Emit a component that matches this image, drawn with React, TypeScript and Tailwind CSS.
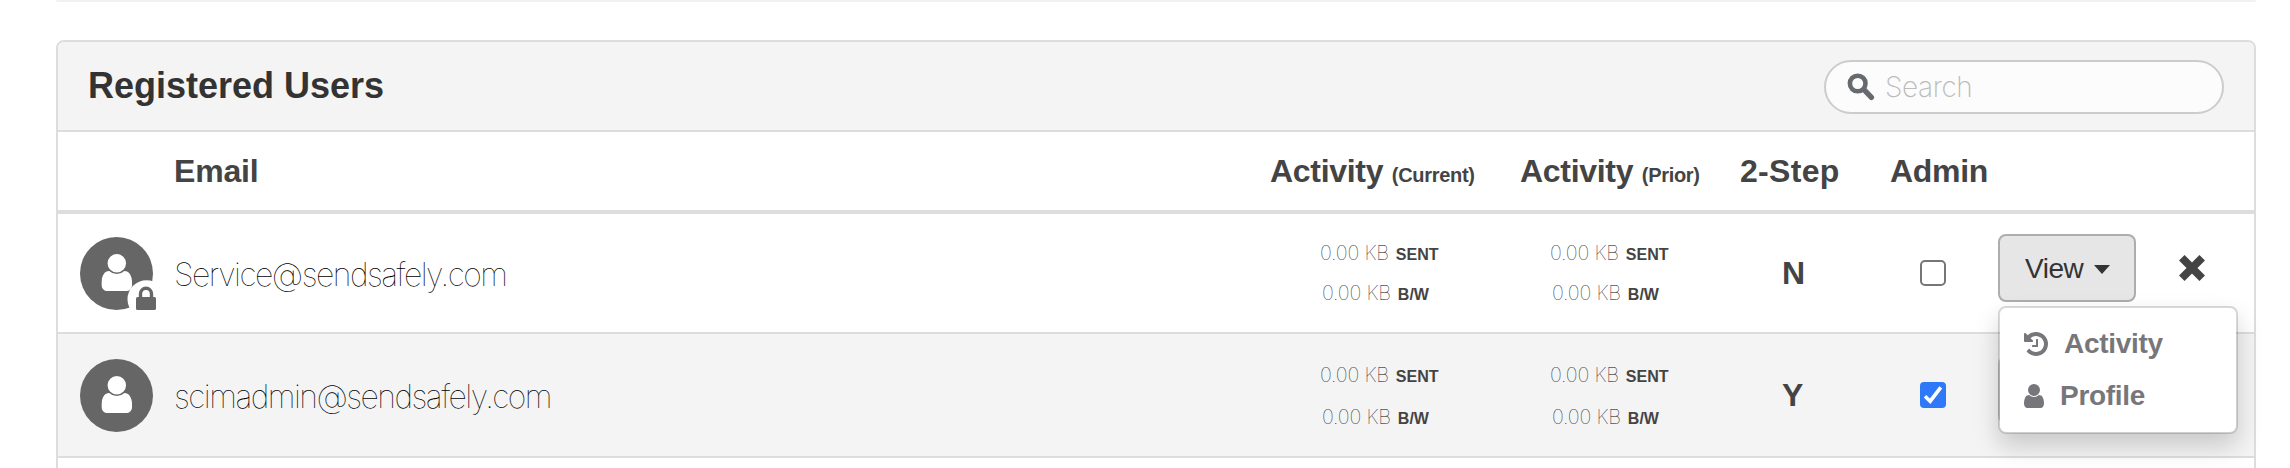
import type { ReactNode } from 'react';

const GRID = 'grid grid-cols-[116px_1fr_250px_220px_150px_108px_256px] items-center';

const USER_PATH =
  'M1280 1399q0 109-62.5 187t-150.5 78h-854q-88 0-150.5-78t-62.5-187q0-85 8.5-160.5t31.5-152 58.5-131 94-89 134.5-34.5q131 128 313 128t313-128q76 0 134.5 34.5t94 89 58.5 131 31.5 152 8.5 160.5zm-256-887q0 159-112.5 271.5t-271.5 112.5-271.5-112.5-112.5-271.5 112.5-271.5 271.5-112.5 271.5 112.5 112.5 271.5z';
const HISTORY_PATH =
  'M1664 896q0 156-61 298t-164 245-245 164-298 61q-172 0-327-72.5t-264-204.5q-7-10-6.5-22.5t8.5-20.5l137-138q10-9 25-9 16 2 23 12 73 95 179 147t225 52q104 0 198.5-40.5t163.5-109.5 109.5-163.5 40.5-198.5-40.5-198.5-109.5-163.5-163.5-109.5-198.5-40.5q-98 0-188 35.5t-160 101.5l137 138q31 30 14 69-17 40-59 40h-448q-26 0-45-19t-19-45v-448q0-42 40-59 39-17 69 14l130 129q107-101 244.5-156.5t284.5-55.5q156 0 298 61t245 164 164 245 61 298zm-640-288v448q0 14-9 23t-23 9h-320q-14 0-23-9t-9-23v-64q0-14 9-23t23-9h224v-352q0-14 9-23t23-9h64q14 0 23 9t9 23z';

interface User {
  email: string;
  twoStep: 'Y' | 'N';
  admin: boolean;
  locked: boolean;
}

const USERS: User[] = [
  { email: 'Service@sendsafely.com', twoStep: 'N', admin: false, locked: true },
  { email: 'scimadmin@sendsafely.com', twoStep: 'Y', admin: true, locked: false },
];

function Avatar({ locked }: { locked: boolean }) {
  return (
    <svg viewBox="0 0 78 73" className="ml-[22px] h-[73px] w-[78px]">
      <circle cx="36.5" cy="36.5" r="36.5" fill="#666" />
      <svg x="21.4" y="17" width="30.8" height="37" viewBox="0 128 1280 1536" preserveAspectRatio="none">
        <path d={USER_PATH} fill="#fff" />
      </svg>
      {locked && (
        <>
          <circle cx="66.5" cy="62.3" r="19" fill="#fff" />
          {/* padlock */}
          <path d="M60.5 62v-5.2a5.5 5.5 0 0 1 11 0V62" fill="none" stroke="#666" strokeWidth="3.4" />
          <rect x="56" y="60" width="20" height="13" rx="1.6" fill="#666" />
        </>
      )}
    </svg>
  );
}

function SearchIcon() {
  return (
    <svg viewBox="0 0 28 30" className="h-[30px] w-7" fill="none" stroke="#666a6e">
      <circle cx="10.7" cy="11.5" r="7.8" strokeWidth="4.6" />
      <path d="M17 17.7l7.4 7.6" strokeWidth="5.4" strokeLinecap="round" />
    </svg>
  );
}

function Usage({ tall }: { tall: boolean }) {
  return (
    <div className={`font-['Inter'] text-xl font-thin ${tall ? 'pt-px leading-[42px]' : 'leading-10'}`}>
      <Stat unit="SENT" tall={tall} />
      <Stat unit="B/W" tall={tall} />
    </div>
  );
}

function Stat({ unit, tall }: { unit: string; tall: boolean }) {
  return (
    <div className={`whitespace-nowrap ${tall ? 'h-[42px]' : 'h-10'} ${unit === 'B/W' ? 'pl-0.5' : ''}`}>
      <span className="tracking-[-0.2px] text-black">0.00 KB</span>
      <span className="ml-[7px] font-['Liberation_Sans'] text-base leading-none font-bold">{unit}</span>
    </div>
  );
}

function Checkbox({ checked }: { checked: boolean }) {
  if (!checked) return <div className="size-[26px] rounded-[5px] border-2 border-[#767676] bg-white" />;
  return (
    <div className="size-[26px] rounded-[4px] bg-[#2f78f7]">
      <svg viewBox="0 0 26 26" fill="none" stroke="#fff" strokeWidth="3.6">
        <path d="M5 14.2l5.2 5L20.8 5.4" />
      </svg>
    </div>
  );
}

function MenuItem({ icon, label }: { icon: ReactNode; label: string }) {
  return (
    <div className="flex h-[52px] items-center pl-6 text-[28px] leading-[52px] font-bold tracking-[-0.3px] text-[#77767b]">
      {icon}
      {label}
    </div>
  );
}

function ViewMenu() {
  return (
    <div className="absolute top-[72px] left-0 z-10 h-32 w-60 rounded-lg border-2 border-black/15 bg-white bg-clip-padding pt-2.5 shadow-[0_12px_24px_rgba(0,0,0,0.175)]">
      <MenuItem
        label="Activity"
        icon={
          <svg viewBox="128 128 1536 1536" className="mr-4 size-6" fill="currentColor">
            <path d={HISTORY_PATH} />
          </svg>
        }
      />
      <MenuItem
        label="Profile"
        icon={
          <svg viewBox="0 128 1280 1536" className="mr-4 h-6 w-5" fill="currentColor">
            <path d={USER_PATH} />
          </svg>
        }
      />
    </div>
  );
}

function Actions({ open }: { open: boolean }) {
  // Collapsed rows sit behind the open menu, so only the outline is kept there
  if (!open) return <div className="mb-2.5 h-[68px] w-[138px] rounded-lg border-2 border-[#ccc] bg-white" />;
  return (
    <div className="relative mb-2.5 flex items-center">
      <button className="flex h-[68px] w-[138px] items-center rounded-lg border-2 border-[#adadad] bg-[#e6e6e6] pl-[25px] text-[28px] leading-none tracking-[-0.5px] text-[#333]">
        <span className="pt-0.5">View</span>
        <svg viewBox="0 0 16 9" className="mt-0.5 ml-[11px] h-[9px] w-4">
          <path d="M0 0h16L8 9z" fill="#333" />
        </svg>
      </button>
      <svg viewBox="0 0 26 26" className="ml-[43px] size-[26px]" stroke="#444" strokeWidth="7.8">
        <path d="M2.8 2.8l20.4 20.4M23.2 2.8L2.8 23.2" />
      </svg>
      <ViewMenu />
    </div>
  );
}

function UserRow({ user, index }: { user: User; index: number }) {
  const odd = index % 2 === 1;
  return (
    <div className={`${GRID} border-b-2 border-[#ddd] ${odd ? 'h-[124px] bg-[#f4f4f4]' : 'h-[120px]'}`}>
      <Avatar locked={user.locked} />
      <div className="pt-1 font-['Inter'] text-[32px] font-thin tracking-[-1.53px] text-black">{user.email}</div>
      <div className="pl-[50px]"><Usage tall={odd} /></div>
      <div className="pl-[30px]"><Usage tall={odd} /></div>
      <div className="pl-[42px] text-[32px] leading-9 font-bold">{user.twoStep}</div>
      <div className="pl-[30px]"><Checkbox checked={user.admin} /></div>
      <Actions open={index === 0} />
    </div>
  );
}

export default function App() {
  return (
    <div className="h-[468px] overflow-hidden bg-white px-14 pr-[34px] font-['Liberation_Sans',sans-serif] text-[#444]">
      <div className="h-0.5 rounded-b-lg bg-[#f1f1f1]" />
      <div className="mt-[38px] h-[460px] rounded-lg border-2 border-[#ddd]">
        <div className="flex h-[90px] items-center justify-between rounded-t-md border-b-2 border-[#ddd] bg-[#f4f4f4] px-[30px]">
          <h1 className="text-4xl leading-[42px] font-bold text-[#333]">Registered Users</h1>
          <div className="mt-0.5 flex h-[54px] w-[400px] items-center rounded-full border-2 border-[#ccc] bg-[#fcfcfc] pl-[21px]">
            <SearchIcon />
            <span className="ml-2.5 font-['Inter'] text-[28px] leading-8 font-extralight tracking-[-0.4px] text-[#bbb]">Search</span>
          </div>
        </div>
        <div className={`${GRID} h-[82px] border-b-4 border-[#ddd] text-[32px] leading-9 font-bold`}>
          <div />
          <div className="tracking-[-0.2px]">Email</div>
          <div className="tracking-[-0.3px]">Activity <span className="text-xl leading-none">(Current)</span></div>
          <div className="tracking-[-0.3px]">Activity <span className="text-xl leading-none">(Prior)</span></div>
          <div className="tracking-[0.3px]">2-Step</div>
          <div className="tracking-[-0.3px]">Admin</div>
          <div />
        </div>
        {USERS.map((u, i) => (
          <UserRow key={u.email} user={u} index={i} />
        ))}
      </div>
    </div>
  );
}
